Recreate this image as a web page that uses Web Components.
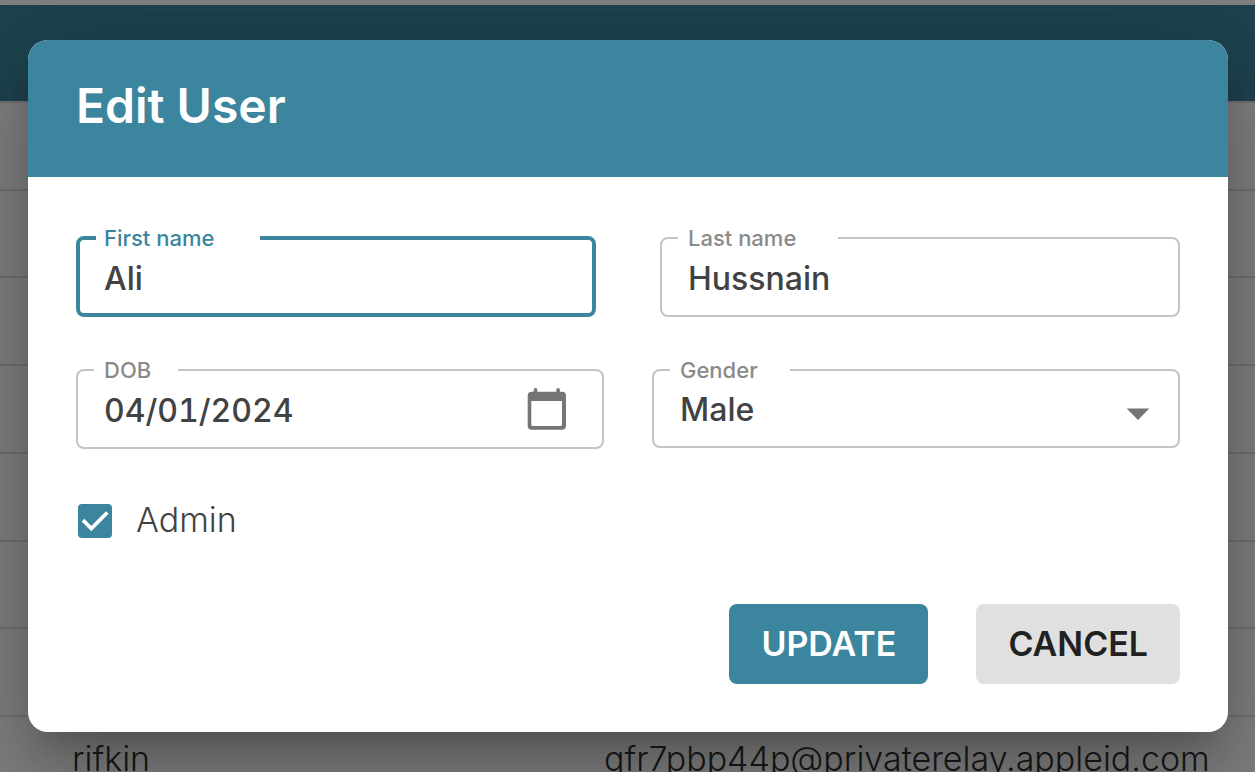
<!DOCTYPE html>
<html lang="en">
<head>
<meta charset="utf-8">
<meta name="viewport" content="width=device-width, initial-scale=1">
<title>Edit User</title>
<style>
  html, body { height: 100%; }
  body {
    margin: 0;
    overflow: hidden;
    background: #fff;
    font-family: Inter, "Open Sans", sans-serif;
    --brand: #3c859e;
    --ink: #424242;
  }
</style>
</head>
<body>
<user-admin></user-admin>

<script>
const define = (name, markup, setup) => {
  const template = document.createElement('template');
  template.innerHTML = markup;
  customElements.define(name, class extends HTMLElement {
    connectedCallback() {
      if (this.shadowRoot) return;
      const root = this.attachShadow({ mode: 'open' });
      root.append(template.content.cloneNode(true));
      if (setup) setup(this, root);
    }
  });
};

/* Users list behind the dialog */
define('user-table', `
  <style>
    :host { display: block; padding-top: 5px; }
    table { width: 100%; border-collapse: separate; border-spacing: 0; table-layout: fixed; }
    th { height: 96px; padding: 0; background: var(--brand); border-bottom: 2px solid #e0e0e0; }
    td {
      box-sizing: border-box; height: 88px; padding: 0 0 2px 72px;
      border-bottom: 2px solid #e0e0e0;
      color: #333; font-size: 34px; font-weight: 300; line-height: 40px; white-space: nowrap;
    }
    td + td { padding-left: 0; }
    tr:nth-child(4n + 2) td { height: 87px; }
    col:first-child { width: 604px; }
  </style>
  <table>
    <colgroup><col><col></colgroup>
    <thead><tr><th></th><th></th></tr></thead>
    <tbody>
      <tr><td></td><td></td></tr><tr><td></td><td></td></tr>
      <tr><td></td><td></td></tr><tr><td></td><td></td></tr>
      <tr><td></td><td></td></tr><tr><td></td><td></td></tr>
      <tr><td></td><td></td></tr>
      <tr><td>rifkin</td><td>qfr7pbp44p@privaterelay.appleid.com</td></tr>
    </tbody>
  </table>
`);

/* Outlined control with its label set into the border */
define('outlined-field', `
  <style>
    :host { display: block; min-width: 0; --line: #c4c4c4; --label: #8a8a8a; }
    :host([active]) { --line: var(--brand); --label: var(--brand); }
    fieldset {
      box-sizing: border-box; min-width: 0; height: 91px; margin: 0;
      padding: 0 26px; border: 2px solid var(--line); border-radius: 8px;
    }
    :host([type="select"]) fieldset { height: 90px; }
    :host([active]) fieldset { padding: 0 24px; border-width: 4px; }
    legend {
      box-sizing: border-box; width: var(--notch, 120px); height: 24px;
      margin-left: -10px; padding: 0 0 0 10px;
      color: var(--label); font-size: 22px; font-weight: 500; line-height: 24px;
    }
    :host([active]) legend { margin-left: -8px; padding-left: 8px; }
    .row { display: flex; align-items: center; height: 58px; }
    .stack { display: grid; flex: 1; align-items: center; min-width: 0; }
    .stack > * { grid-area: 1 / 1; }
    input, select {
      appearance: none; width: 100%; min-width: 0; height: 58px; margin: 0; padding: 0;
      border: 0; outline: 0; background: none;
      color: var(--ink); font: 500 32px/58px Inter, "Open Sans", sans-serif;
      font-variant-numeric: tabular-nums;
    }
    :host([type="select"]) .row { height: 56px; }
    select { height: 56px; line-height: 56px; }
    .arrow { justify-self: end; margin: 7px 2px 0 0; pointer-events: none; }
  </style>
  <fieldset>
    <legend><label for="control"></label></legend>
    <div class="row"><div class="stack"></div><slot name="end"></slot></div>
  </fieldset>
`, (host, root) => {
  const label = host.getAttribute('label');
  const value = host.getAttribute('value');
  root.querySelector('label').textContent = label;
  const stack = root.querySelector('.stack');
  if (host.getAttribute('type') === 'select') {
    stack.innerHTML = `
      <select id="control"></select>
      <svg class="arrow" width="24" height="12" viewBox="0 0 24 12" aria-hidden="true"><path d="M.7.5h22.6L12 12z" fill="#757575"/></svg>`;
    stack.querySelector('select').add(new Option(value, value, true, true));
  } else {
    stack.innerHTML = '<input id="control" type="text">';
    stack.querySelector('input').value = value;
  }
});

define('check-field', `
  <style>
    :host { display: block; }
    label { display: inline-flex; align-items: center; gap: 24px; height: 46px; padding-left: 2px; color: var(--ink); font-size: 34px; font-weight: 300; line-height: 42px; }
    .box { display: grid; margin-top: 2px; }
    .box > * { grid-area: 1 / 1; }
    input { appearance: none; width: 34px; height: 34px; margin: 0; border: 2px solid #757575; border-radius: 4px; }
    input:checked { border-color: var(--brand); background: var(--brand); }
    svg { pointer-events: none; visibility: hidden; }
    input:checked + svg { visibility: visible; }
  </style>
  <label>
    <span class="box">
      <input type="checkbox" checked>
      <svg width="34" height="34" viewBox="0 0 34 34" aria-hidden="true"><path d="M5 16.2l8.3 8.3L29.3 8.5" fill="none" stroke="#fff" stroke-width="3.8"/></svg>
    </span>
    <span><slot></slot></span>
  </label>
`);

define('action-button', `
  <style>
    :host { display: block; }
    button {
      height: 80px; margin: 0; padding: 0 32px; border: 0; border-radius: 8px;
      background: #e0e0e0; color: #212121;
      font: 600 34px/40px Inter, "Open Sans", sans-serif; cursor: pointer;
    }
    :host([primary]) button { background: var(--brand); color: #fff; }
  </style>
  <button type="button"><slot></slot></button>
`);

define('modal-dialog', `
  <style>
    :host {
      position: absolute; inset: 0; box-sizing: border-box; padding: 40px 27px 40px 28px;
      display: flex; justify-content: center; align-items: center; background: rgba(0, 0, 0, .5);
    }
    section {
      width: 100%; max-width: 1200px; border-radius: 20px; overflow: hidden; background: #fff;
      box-shadow: 0 22px 30px -14px rgba(0,0,0,.2), 0 48px 76px 6px rgba(0,0,0,.14), 0 18px 92px 16px rgba(0,0,0,.12);
    }
    header { padding: 38px 48px 43px; background: var(--brand); color: #fff; }
    h2 { margin: 0; font-size: 48px; font-weight: 600; line-height: 56px; }
    .body { padding: 49px 48px 48px; }
  </style>
  <section role="dialog" aria-modal="true" aria-labelledby="title">
    <header><h2 id="title"><slot name="title"></slot></h2></header>
    <div class="body"><slot></slot></div>
  </section>
`);

define('user-admin', `
  <style>
    :host { display: block; position: relative; height: 100%; min-height: 700px; overflow: hidden; }
    form { display: block; }
    .pair { display: grid; grid-template-columns: 1fr 1fr; align-items: start; gap: 64px; }
    .pair + .pair { gap: 48px; margin-top: 41px; }
    .first { --notch: 164px; }
    .last { --notch: 160px; }
    .dob { --notch: 84px; }
    .gender { --notch: 120px; }
    .picker { display: grid; margin: 0 9px 4px 0; padding: 0; border: 0; background: none; cursor: pointer; }
    check-field { margin-top: 48px; }
    .actions { display: flex; justify-content: flex-end; gap: 48px; margin-top: 61px; }
  </style>
  <user-table></user-table>
  <modal-dialog>
    <span slot="title">Edit User</span>
    <form>
      <div class="pair">
        <outlined-field class="first" label="First name" value="Ali" active></outlined-field>
        <outlined-field class="last" label="Last name" value="Hussnain"></outlined-field>
      </div>
      <div class="pair">
        <outlined-field class="dob" label="DOB" value="04/01/2024">
          <button class="picker" slot="end" type="button" aria-label="Choose date">
            <svg width="40" height="42" viewBox="0 0 40 42" aria-hidden="true">
              <path fill="#757575" fill-rule="evenodd" d="M6.7 3.7V1.8a1.8 1.8 0 0 1 3.6 0v1.9h19V1.8a1.8 1.8 0 0 1 3.6 0v1.9H35a4 4 0 0 1 4 4v30a4 4 0 0 1-4 4H4.7a4 4 0 0 1-4-4v-30a4 4 0 0 1 4-4zM4.3 13v23.5A1.5 1.5 0 0 0 5.8 38h27.7a1.5 1.5 0 0 0 1.5-1.5V13z"/>
            </svg>
          </button>
        </outlined-field>
        <outlined-field class="gender" type="select" label="Gender" value="Male"></outlined-field>
      </div>
      <check-field>Admin</check-field>
      <div class="actions">
        <action-button primary>UPDATE</action-button>
        <action-button>CANCEL</action-button>
      </div>
    </form>
  </modal-dialog>
`);
</script>
</body>
</html>
